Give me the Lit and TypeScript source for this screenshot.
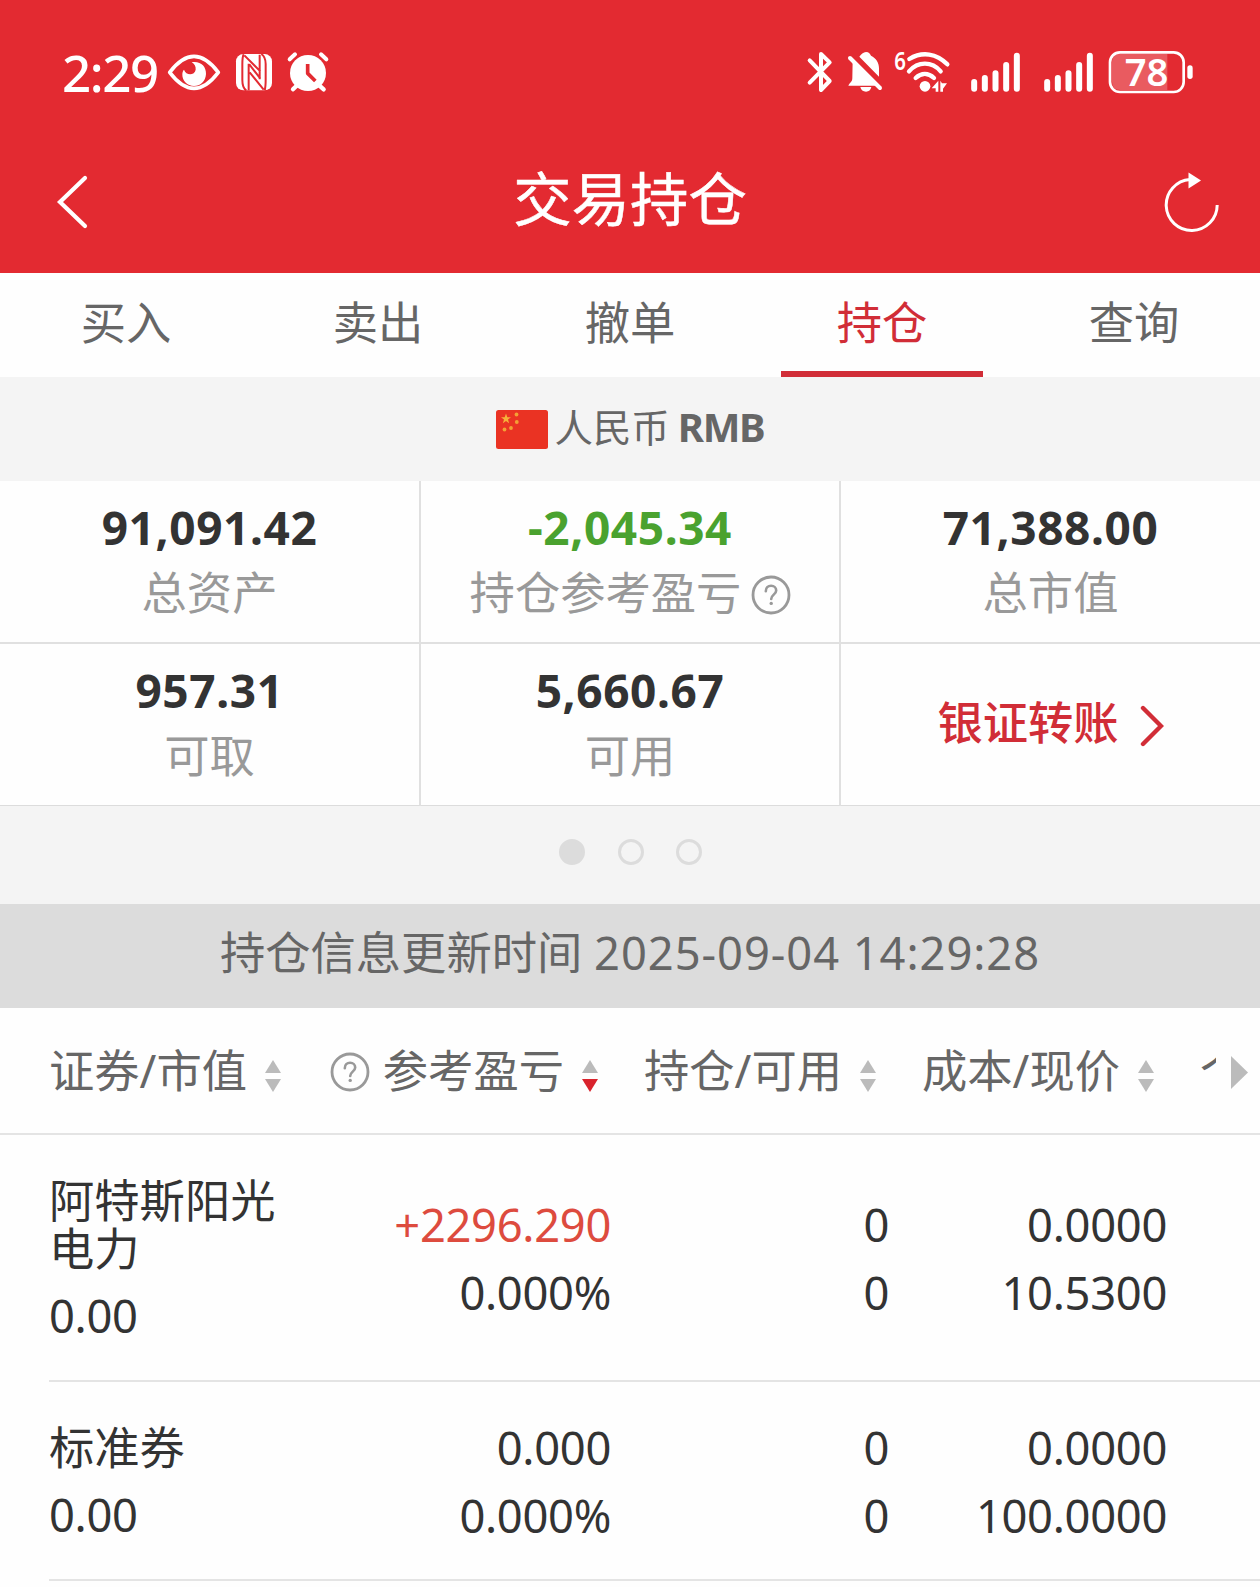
import { LitElement, html, css, svg, nothing } from "lit";
import { customElement } from "lit/decorators.js";

interface Holding {
  name: string;
  value: string;
  pnl: string;
  rate: string;
  up: boolean;
  held: string;
  usable: string;
  cost: string;
  price: string;
}

const holdings: Holding[] = [
  { name: "阿特斯阳光电力", value: "0.00", pnl: "+2296.290", rate: "0.000%", up: true, held: "0", usable: "0", cost: "0.0000", price: "10.5300" },
  { name: "标准券", value: "0.00", pnl: "0.000", rate: "0.000%", up: false, held: "0", usable: "0", cost: "0.0000", price: "100.0000" },
];

const tabs = ["买入", "卖出", "撤单", "持仓", "查询"];

const help = html`<svg class="help" width="40" height="40" viewBox="0 0 40 40" fill="none" stroke="#999">
  <circle cx="20" cy="20" r="18" stroke-width="2.8" />
  <path d="M14.8 16.2c0-3.4 2.2-5.4 5.3-5.4 3 0 5.1 2 5.1 4.7 0 4-5 4.300-5 8.400" stroke-width="2.600" stroke-linecap="round" />
  <circle cx="20.2" cy="28.4" r="1.7" fill="#999" stroke="none" />
</svg>`;

const sorter = (down = false) => html`<svg class="sorter" width="16" height="32" viewBox="0 0 16 32">
  <path d="M8 0 16 13H0z" fill="#bbb" />
  <path d="M0 19H16L8 32z" fill=${down ? "#d9232d" : "#bbb"} />
</svg>`;

const bars = svg`
  <path d="M552.5 156v20M584.5 144v32M616.5 130v46M648.5 105v71M680.5 77v99" stroke="#fff" stroke-width="18" stroke-linecap="round" />`;

@customElement("status-bar")
class StatusBar extends LitElement {
  static styles = css`
    :host {
      display: flex;
      align-items: center;
      height: 44px;
      padding: 50px 66px 0 62px;
      color: #fff;
    }
    svg { display: block; flex: none; overflow: visible; }
    .time {
      width: 105px;
      font: 500 51px/44px "Noto Sans", sans-serif;
      letter-spacing: -1.4px;
      white-space: nowrap;
    }
    .nfc { margin-left: 14px; }
    .alarm { margin-left: 14px; }
    .bt { margin-left: auto; }
    .bell { margin-left: 14px; }
    .wifi { margin-left: 11px; }
    .sig { margin-left: 19px; }
    .sig2 { margin-left: 22px; }
    .battery { margin-left: 14px; }
    .level { font: 600 112px "Noto Sans", sans-serif; }
    .gen { font: 600 76px "Noto Sans", sans-serif; }
  `;

  render() {
    return html`
      <span class="time">2:29</span>
      <svg width="54" height="44" viewBox="381 60 162 132">
        <path d="M389 127Q462 31 535 127Q462 223 389 127z" fill="none" stroke="#fff" stroke-width="11" stroke-linejoin="round" />
        <path d="M455 97C480 92 499 108 498 132C497 154 481 168 462 168C442 168 426 152 427 133C427 127 429 122 432 119C438 138 464 137 467 119C468 108 463 102 455 97z" fill="#fff" />
      </svg>
      <svg class="nfc" width="38" height="44" viewBox="585 60 114 132">
        <rect x="588" y="72" width="108" height="109" rx="22" fill="#fff" />
        <path d="M611 73C607 80 607 90 607 104V150C607 168 610 176 619 181" fill="none" stroke="#e32a31" stroke-width="6" />
        <path d="M664 72C675 79 677 87 677 102V150C677 166 676 174 674 181" fill="none" stroke="#e32a31" stroke-width="6" />
        <path d="M612 74L661 121V100L641 76" fill="none" stroke="#e32a31" stroke-width="0" />
        <path d="M626 181V101M613 76L661 124M628 103L661 146M629 127L671 179M659 74V148" fill="none" stroke="#e32a31" stroke-width="6" />
      </svg>
      <svg class="alarm" width="42" height="44" viewBox="742 60 126 132" stroke-linecap="round">
        <circle cx="805" cy="129" r="54" fill="#fff" />
        <path d="M750 88L766 73M844 73L860 88" stroke="#fff" stroke-width="12" />
        <path d="M774 164L760 178M836 164L852 178" stroke="#fff" stroke-width="13" />
        <path d="M804 102V130L827 153" fill="none" stroke="#e32a31" stroke-width="11" stroke-linecap="butt" stroke-linejoin="round" />
      </svg>

      <svg class="bt" width="26" height="44" viewBox="51 60 78 132">
        <path d="M59 91L119 153L93 180V72L119 97L59 158" fill="none" stroke="#fff" stroke-width="12" stroke-linejoin="round" stroke-linecap="round" />
      </svg>
      <svg class="bell" width="36" height="44" viewBox="171 60 108 132">
        <path d="M188 92L262 167H175C180 157 187 156 187 144z" fill="#fff" />
        <path d="M208 80C213 73 220 66 228 66C237 66 241 72 243 77C258 85 267 97 267 115V140z" fill="#fff" />
        <path d="M180 84L270 174" stroke="#fff" stroke-width="12" stroke-linecap="round" />
        <path d="M211 171H244C242 180 237 185 228 185C219 185 213 180 211 171z" fill="#fff" />
      </svg>
      <svg class="wifi" width="57" height="44" viewBox="312 60 171 132">
        <text class="gen" fill="#fff" x="313" y="119" textLength="35" lengthAdjust="spacingAndGlyphs">6</text>
        <g fill="none" stroke="#fff" stroke-width="13" stroke-linecap="round">
          <path d="M358 87C397 63 440 70 472 103" />
          <path d="M357 124C384 94 425 93 452 124" />
          <path d="M377 144C394 128 415 128 432 144" />
        </g>
        <circle cx="405" cy="169" r="16" fill="#fff" />
        <path d="M445 152V185H437V175H425zM451 152L456 160H471L459 176V185H451z" fill="#fff" />
      </svg>
      <svg class="sig" width="51" height="44" viewBox="540 60 153 132">${bars}</svg>
      <svg class="sig2" width="51" height="44" viewBox="540 60 153 132">${bars}</svg>
      <svg class="battery" width="86" height="44" viewBox="953 60 258 132">
        <path d="M990 72H1131V180H990Q965 180 965 155V97Q965 72 990 72z" fill="#fff" fill-opacity=".23" />
        <rect x="959" y="67" width="221" height="119" rx="30" fill="none" stroke="#fff" stroke-width="8" />
        <rect x="1191" y="106" width="16" height="41" rx="8" fill="#fff" />
        <text class="level" fill="#fff" x="1003" y="167" textLength="131" lengthAdjust="spacingAndGlyphs">78</text>
      </svg>
    `;
  }
}

@customElement("app-root")
class AppRoot extends LitElement {
  static styles = css`
    :host {
      display: block;
      width: 1260px;
      height: 1587px;
      overflow: hidden;
      background: #fefefe;
      color: #333;
      font: 400 45.3px/64px "Noto Sans", "Noto Sans CJK SC", sans-serif;
    }
    svg { display: block; flex: none; }
    .top { height: 273px; background: #e32a31; color: #fff; }
    .nav {
      display: flex;
      align-items: center;
      justify-content: space-between;
      height: 108px;
      margin-top: 48px;
      padding: 0 40px 0 55px;
    }
    .title { margin-top: 5px; padding-left: 7px; font-size: 58.4px; line-height: 108px; -webkit-text-stroke: 0.5px #fff; }
    .back { margin-top: 12px; }
    .reload { margin-top: 8px; }
    .tabs { display: grid; grid-template-columns: repeat(5, 1fr); height: 104px; color: #666; }
    .tab { display: flex; justify-content: center; line-height: 99px; height: 98px; }
    .tab.active { flex-direction: column; align-items: center; height: 104px; color: #d12d37; }
    .active::after { content: ""; flex: none; width: 202px; height: 6px; margin-top: -1px; background: #d12d37; }
    .currency {
      display: flex;
      align-items: center;
      justify-content: center;
      height: 104px;
      background: #f4f4f4;
      color: #666;
      font-size: 38.4px;
    }
    .flag { margin: 1px 7px 0 0; }
    .currency span { margin-top: -4px; }
    .currency b { margin: -4px 0 0 8px; font-size: 40px; font-weight: 700; letter-spacing: -1.3px; }
    .summary {
      display: grid;
      grid-template-columns: 421px 420px 419px;
      grid-template-rows: 163px 162px;
    }
    .cell {
      display: flex;
      flex-direction: column;
      align-items: center;
      box-sizing: border-box;
      padding-top: 14px;
      border-bottom: 2px solid #e0e0e0;
      border-right: 2px solid #e0e0e0;
    }
    .cell:nth-child(3n) { border-right: none; }
    .cell:nth-child(n + 4) { border-bottom-width: 1px; border-bottom-color: #dcdcdc; }
    .figure { font-weight: 700; letter-spacing: 0.6px; font-size: 46px; }
    .loss { color: #4aa22f; }
    .label { display: flex; align-items: center; height: 65px; margin-top: 1px; color: #999; }
    .label .help { margin: 5px -1px 0 10px; }
    .transfer {
      flex-direction: row;
      align-items: center;
      justify-content: center;
      padding: 0 0 3px;
      color: #d12d37;
      font-weight: 500;
    }
    .transfer svg { margin: 5px 0 0 21px; }
    .dots {
      display: flex;
      align-items: center;
      justify-content: center;
      gap: 32.5px;
      height: 98px;
      padding-left: 1px;
      background: #f4f4f4;
    }
    .dot { box-sizing: border-box; width: 26px; height: 26px; margin-bottom: 6px; border: 3px solid #dcdcdc; border-radius: 50%; }
    .on { background: #dcdcdc; }
    .updated {
      height: 104px;
      line-height: 98px;
      background: #dcdcdc;
      color: #666;
      text-align: center;
      white-space: nowrap;
    }
    .updated time { letter-spacing: 0.95px; }
    .head {
      display: grid;
      grid-template-columns: 232px 317px 278px 278px 62px 1fr;
      height: 125px;
      padding-left: 49px;
      border-bottom: 2px solid #e4e4e4;
      color: #666;
      line-height: 123px;
      white-space: nowrap;
    }
    .col { display: flex; align-items: center; justify-content: flex-end; height: 124px; }
    .col .sorter { margin: 11px 0 0 18px; }
    .col.first { justify-content: space-between; }
    .col .help { margin: 4px 13px 0 0; }
    .peek { justify-content: flex-start; overflow: hidden; padding-left: 46px; }
    .more { display: flex; align-items: center; height: 123px; padding: 6px 0 0 15px; box-sizing: border-box; }
    .row {
      display: grid;
      grid-template-columns: 232px 330px 278px 278px;
      align-items: center;
      margin-left: 49px;
      border-bottom: 2px solid #e4e4e4;
      line-height: 68px;
      letter-spacing: -0.3px;
    }
    .stock { align-self: start; padding: 42px 0 30px; }
    .name { line-height: 48px; margin-bottom: 9px; letter-spacing: 0; }
    .num { padding-top: 2px; text-align: right; }
    .rise { color: #dd4b3e; }
  `;

  private figure(value: string, label: string, loss = false) {
    return html`<div class="cell">
      <span class="figure ${loss ? "loss" : ""}">${value}</span>
      <span class="label">${label}${loss ? help : nothing}</span>
    </div>`;
  }

  render() {
    return html`
      <header class="top">
        <status-bar></status-bar>
        <div class="nav">
          <svg class="back" width="34" height="56" viewBox="0 0 34 56" fill="none" stroke="#fff" stroke-width="4.2" stroke-linecap="round">
            <path d="M30 4L5 28L30 52" />
          </svg>
          <span class="title">交易持仓</span>
          <svg class="reload" width="56" height="64" viewBox="0 0 56 64">
            <path d="M26 11.5A25.5 25.5 0 1 0 53.2 37" fill="none" stroke="#fff" stroke-width="3" />
            <path d="M24.5 4.5L37 12.5L24.5 20.5z" fill="#fff" />
          </svg>
        </div>
      </header>
      <nav class="tabs">
        ${tabs.map((t) => html`<span class="tab ${t === "持仓" ? "active" : ""}">${t}</span>`)}
      </nav>
      <div class="currency">
        <svg class="flag" width="52" height="39" viewBox="0 0 52 39">
          <rect width="52" height="39" rx="2.5" fill="#ea3323" />
          <path d="M10 3.5L11.3 7.200H15L12 9.500L13.1 13.200L10 11L6.900 13.200L8 9.500L5 7.200H8.700z" fill="#f6b13a" />
          <g fill="#f3a035"><circle cx="20.5" cy="4.5" r="1.9" /><circle cx="20.8" cy="12" r="1.9" /><circle cx="15" cy="18" r="1.9" /><circle cx="8.5" cy="19.5" r="1.9" /></g>
        </svg>
        <span>人民币</span><b>RMB</b>
      </div>
      <section class="summary">
        ${this.figure("91,091.42", "总资产")}
        ${this.figure("-2,045.34", "持仓参考盈亏", true)}
        ${this.figure("71,388.00", "总市值")}
        ${this.figure("957.31", "可取")}
        ${this.figure("5,660.67", "可用")}
        <div class="cell transfer">
          银证转账
          <svg width="24" height="42" viewBox="0 0 24 42" fill="none" stroke="#d12d37" stroke-width="4.4" stroke-linecap="round"><path d="M3 3L21 21L3 39" /></svg>
        </div>
      </section>
      <div class="dots"><i class="dot on"></i><i class="dot"></i><i class="dot"></i></div>
      <div class="updated">持仓信息更新时间 <time>2025-09-04 14:29:28</time></div>
      <div class="head">
        <span class="col first">证券/市值${sorter()}</span>
        <span class="col">${help}参考盈亏${sorter(true)}</span>
        <span class="col">持仓/可用${sorter()}</span>
        <span class="col">成本/现价${sorter()}</span>
        <span class="col peek">个</span>
        <span class="more"><svg width="17" height="33" viewBox="0 0 17 33"><path d="M0 0L17 16.5L0 33z" fill="#bbb" /></svg></span>
      </div>
      ${holdings.map(
        (h) => html`<div class="row">
          <div class="stock"><div class="name">${h.name}</div>${h.value}</div>
          <div class="num"><div class=${h.up ? "rise" : ""}>${h.pnl}</div>${h.rate}</div>
          <div class="num"><div>${h.held}</div>${h.usable}</div>
          <div class="num"><div>${h.cost}</div>${h.price}</div>
        </div>`,
      )}
    `;
  }
}
